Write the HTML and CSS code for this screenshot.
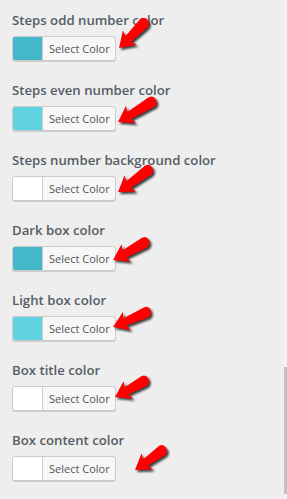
FILE: index.html
```html
<!DOCTYPE html>
<html lang="en">
<head>
  <meta charset="UTF-8" />
  <meta name="viewport" content="width=device-width, initial-scale=1.0"/>
  <title>Colors</title>
  <link rel="stylesheet" href="styles.css">
</head>
<body>
  <div class="panel">
    <div class="controls-list">

      <div class="control">
        <span class="control-title">Steps odd number color</span>
        <div class="picker-wrap">
          <button class="picker"><span class="swatch swatch-dark"></span><span class="picker-label">Select Color</span></button>
          <svg class="pointer" viewBox="0 0 48 36"><path d="M0,10 L15,0 L13,6 L35,4 Q40,4 40,9 Q40,14 35,15 L13,14 L15,20 Z" transform="translate(3,30) rotate(-44) translate(0,-10)"/></svg>
        </div>
      </div>

      <div class="control">
        <span class="control-title">Steps even number color</span>
        <div class="picker-wrap">
          <button class="picker"><span class="swatch swatch-light"></span><span class="picker-label">Select Color</span></button>
          <svg class="pointer pointer-low" viewBox="0 0 48 36"><path d="M0,10 L15,0 L13,6 L39,4 Q44,4 44,9 Q44,14 39,15 L13,14 L15,20 Z" transform="translate(3,30) rotate(-30) translate(0,-10)"/></svg>
        </div>
      </div>

      <div class="control">
        <span class="control-title">Steps number background color</span>
        <div class="picker-wrap">
          <button class="picker"><span class="swatch"></span><span class="picker-label">Select Color</span></button>
          <svg class="pointer pointer-low" viewBox="0 0 48 36"><path d="M0,10 L15,0 L13,6 L37,4 Q42,4 42,9 Q42,14 37,15 L13,14 L15,20 Z" transform="translate(3,30) rotate(-35) translate(0,-10)"/></svg>
        </div>
      </div>

      <div class="control">
        <span class="control-title">Dark box color</span>
        <div class="picker-wrap">
          <button class="picker"><span class="swatch swatch-dark"></span><span class="picker-label">Select Color</span></button>
          <svg class="pointer pointer-close" viewBox="0 0 48 36"><path d="M0,10 L15,0 L13,6 L36,4 Q41,4 41,9 Q41,14 36,15 L13,14 L15,20 Z" transform="translate(3,30) rotate(-28) translate(0,-10)"/></svg>
        </div>
      </div>

      <div class="control">
        <span class="control-title">Light box color</span>
        <div class="picker-wrap">
          <button class="picker"><span class="swatch swatch-light"></span><span class="picker-label">Select Color</span></button>
          <svg class="pointer pointer-close pointer-high" viewBox="0 0 48 36"><path d="M0,10 L15,0 L13,6 L36,4 Q41,4 41,9 Q41,14 36,15 L13,14 L15,20 Z" transform="translate(3,30) rotate(-23) translate(0,-10)"/></svg>
        </div>
      </div>

      <div class="control">
        <span class="control-title">Box title color</span>
        <div class="picker-wrap">
          <button class="picker"><span class="swatch"></span><span class="picker-label">Select Color</span></button>
          <svg class="pointer pointer-mid pointer-high" viewBox="0 0 48 36"><path d="M0,10 L15,0 L13,6 L33,4 Q38,4 38,9 Q38,14 33,15 L13,14 L15,20 Z" transform="translate(3,30) rotate(-28) translate(0,-10)"/></svg>
        </div>
      </div>

      <div class="control">
        <span class="control-title">Box content color</span>
        <div class="picker-wrap">
          <button class="picker"><span class="swatch"></span><span class="picker-label">Select Color</span></button>
          <svg class="pointer pointer-far" viewBox="0 0 48 36"><path d="M0,10 L15,0 L13,6 L33,4 Q38,4 38,9 Q38,14 33,15 L13,14 L15,20 Z" transform="translate(3,30) rotate(-35) translate(0,-10)"/></svg>
        </div>
      </div>

    </div>

    <div class="scroll-track">
      <div class="scroll-thumb"></div>
    </div>
  </div>
</body>
</html>
```

FILE: styles.css
```css
* {
  box-sizing: border-box;
}

body {
  margin: 0;
  background: #eeeeee;
  font-family: "Open Sans", sans-serif;
  height: 100vh;
  overflow: hidden;
}

.panel {
  display: flex;
  height: 100vh;
}

.controls-list {
  flex: 1;
  padding: 10px 0 0 12px;
}

.control {
  display: flex;
  flex-direction: column;
  align-items: flex-start;
  height: 70px;
}

.control-title {
  font-size: 13.2px;
  font-weight: 600;
  line-height: 20px;
  color: #555d66;
  margin-bottom: 6px;
}

.picker-wrap {
  position: relative;
}

.picker {
  display: flex;
  align-items: stretch;
  height: 25px;
  padding: 0;
  margin: 0;
  border: 1px solid #cccccc;
  border-radius: 3px;
  background: #f7f7f7;
  box-shadow: 0 1px 0 #cccccc;
  overflow: hidden;
  font-family: inherit;
  cursor: pointer;
}

.swatch {
  width: 30px;
  background: #ffffff;
  border-right: 1px solid #cccccc;
}

.swatch-dark {
  background: #42b8c9;
}

.swatch-light {
  background: #5fd3e1;
}

.picker-label {
  display: flex;
  align-items: center;
  width: 72px;
  padding-left: 6px;
  font-size: 11px;
  color: #555555;
}

/* red annotation arrows */
.pointer {
  position: absolute;
  left: 104px;
  top: -18px;
  width: 48px;
  height: 36px;
  fill: #ff0000;
  filter: drop-shadow(2px 2px 1px rgba(0, 0, 0, 0.75));
}

.pointer-low {
  left: 103px;
  top: -14px;
}

.pointer-close {
  left: 98px;
  top: -16px;
}

.pointer-mid {
  left: 100px;
}

.pointer-high {
  top: -19px;
}

.pointer-far {
  left: 120px;
  top: -16px;
}

.scroll-track {
  width: 3px;
  background: #f3f3f3;
}

.scroll-thumb {
  margin-top: 367px;
  height: 127px;
  background: #c1c1c1;
}
```
